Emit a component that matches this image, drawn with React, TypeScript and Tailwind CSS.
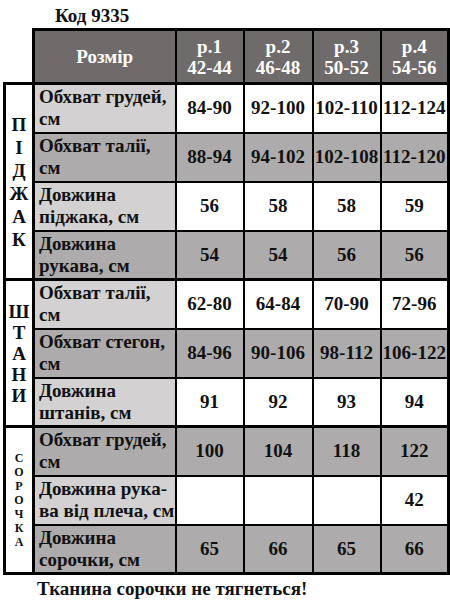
const cols = [
  { p: "р.1", r: "42-44" },
  { p: "р.2", r: "46-48" },
  { p: "р.3", r: "50-52" },
  { p: "р.4", r: "54-56" },
];

type Row = { label: [string, string]; values: string[]; shaded: boolean };

const sections: { letters: string[]; small?: boolean; leading: string; rows: Row[] }[] = [
  {
    letters: ["П", "І", "Д", "Ж", "А", "К"],
    leading: "leading-[23px]",
    rows: [
      { label: ["Обхват грудей,", "см"], values: ["84-90", "92-100", "102-110", "112-124"], shaded: false },
      { label: ["Обхват талії,", "см"], values: ["88-94", "94-102", "102-108", "112-120"], shaded: true },
      { label: ["Довжина", "піджака, см"], values: ["56", "58", "58", "59"], shaded: false },
      { label: ["Довжина", "рукава, см"], values: ["54", "54", "56", "56"], shaded: true },
    ],
  },
  {
    letters: ["Ш", "Т", "А", "Н", "И"],
    leading: "leading-[21px]",
    rows: [
      { label: ["Обхват талії,", "см"], values: ["62-80", "64-84", "70-90", "72-96"], shaded: false },
      { label: ["Обхват стегон,", "см"], values: ["84-96", "90-106", "98-112", "106-122"], shaded: true },
      { label: ["Довжина", "штанів, см"], values: ["91", "92", "93", "94"], shaded: false },
    ],
  },
  {
    letters: ["С", "О", "Р", "О", "Ч", "К", "А"],
    small: true,
    leading: "leading-[14px]",
    rows: [
      { label: ["Обхват грудей,", "см"], values: ["100", "104", "118", "122"], shaded: true },
      { label: ["Довжина рука-", "ва від плеча, см"], values: ["", "", "", "42"], shaded: false },
      { label: ["Довжина", "сорочки, см"], values: ["65", "66", "65", "66"], shaded: true },
    ],
  },
];

export default function App() {
  return (
    <div className="w-[450px] h-[601px] bg-white font-['Liberation_Serif',serif] font-bold text-[#111] overflow-hidden">
      <div className="pl-[55px] pt-[5px] h-[28px] text-[19px] leading-[22px]">Код 9335</div>
      <table className="ml-[3px] w-[444px] table-fixed border-collapse text-[19px]">
        <colgroup>
          <col className="w-[29px]" />
          <col className="w-[142px]" />
          <col className="w-[68px]" />
          <col className="w-[69px]" />
          <col className="w-[68px]" />
          <col className="w-[68px]" />
        </colgroup>
        <thead>
          <tr className="h-[54px]">
            <th className="border-0 p-0"></th>
            <th className="border-[3px] border-r-2 border-b-[3px] border-black bg-[#6f6b6b] text-white font-bold leading-[22px] p-0">
              Розмір
            </th>
            {cols.map((c, i) => (
              <th
                key={c.p}
                className={`border-t-[3px] border-b-[3px] border-black bg-[#6f6b6b] text-white font-bold leading-[21px] p-0 ${
                  i === 3 ? "border-r-[3px]" : "border-r-2"
                }`}
              >
                {c.p}
                <br />
                {c.r}
              </th>
            ))}
          </tr>
        </thead>
        <tbody>
          {sections.map((s) =>
            s.rows.map((row, ri) => (
              <tr key={s.letters.join("") + ri} className="h-[49px]">
                {ri === 0 && (
                  <td rowSpan={s.rows.length} className="border-[3px] border-black p-0 text-center align-middle">
                    <div className={`flex flex-col items-center ${s.small ? "text-[12px]" : "text-[19px]"} ${s.leading}`}>
                      {s.letters.map((l, li) => (
                        <span key={li}>{l}</span>
                      ))}
                    </div>
                  </td>
                )}
                <td
                  className={`border-2 border-black pl-[4px] pr-0 py-0 text-left leading-[22px] whitespace-nowrap ${
                    row.shaded ? "bg-[#adabab]" : "bg-[#d3d1d1]"
                  } ${ri === 0 ? "border-t-[3px]" : ""} ${ri === s.rows.length - 1 ? "border-b-[3px]" : ""}`}
                >
                  {row.label[0]}
                  <br />
                  {row.label[1]}
                </td>
                {row.values.map((v, vi) => (
                  <td
                    key={vi}
                    className={`border-2 border-black p-0 text-center leading-[22px] whitespace-nowrap ${
                      row.shaded ? "bg-[#adabab]" : "bg-white"
                    } ${vi === 3 ? "border-r-[3px]" : ""} ${ri === 0 ? "border-t-[3px]" : ""} ${
                      ri === s.rows.length - 1 ? "border-b-[3px]" : ""
                    }`}
                  >
                    {v}
                  </td>
                ))}
              </tr>
            ))
          )}
        </tbody>
      </table>
      <div className="pl-[37px] pt-[3px] text-[19px] leading-[22px]">Тканина сорочки не тягнеться!</div>
    </div>
  );
}
